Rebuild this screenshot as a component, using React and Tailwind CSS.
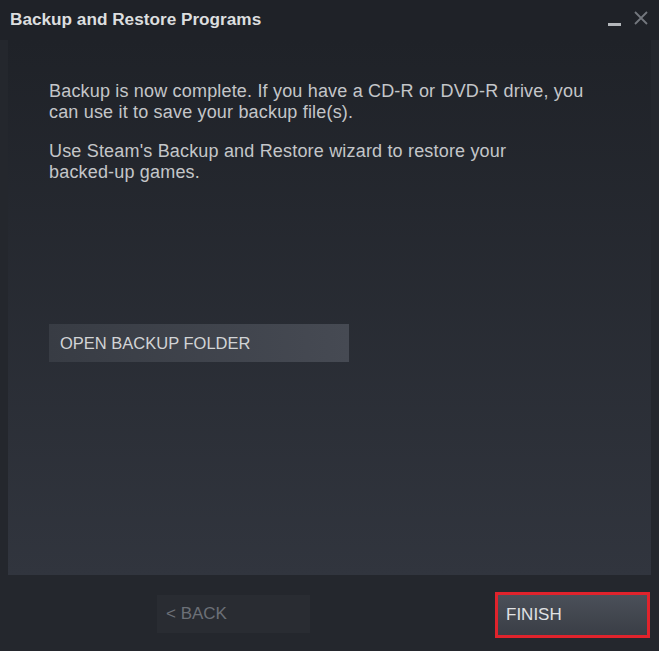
export default function App() {
  return (
    <div
      className="w-[659px] h-[651px] bg-[#24272d] flex flex-col text-[#c9cbcd] overflow-hidden"
      style={{ fontFamily: '"Liberation Sans", Arial, sans-serif' }}
    >
      {/* title bar */}
      <div className="h-[40px] flex items-start justify-between pl-[10px] pr-[10px] pt-[7px] bg-[#1f2228]">
        <div className="text-[17.2px] font-bold text-[#dcdedf]">Backup and Restore Programs</div>
        <div className="flex items-start gap-[12px] pt-[2px]">
          <div className="w-[13px] h-[3px] bg-[#b4b7bb] mt-[14px]" />
          <svg width="16" height="16" viewBox="0 0 16 16" className="mt-[1px]">
            <path d="M2 2 L14 14 M14 2 L2 14" stroke="#73777e" strokeWidth="1.8" />
          </svg>
        </div>
      </div>

      {/* content panel */}
      <div className="mx-[8px] h-[535px] bg-gradient-to-b from-[#1f2228] to-[#31353e] flex flex-col pl-[41px] pr-[20px] pt-[41px]">
        <p className="text-[18px] leading-[21px] tracking-[0.18px] text-[#c4c6c9]">
          Backup is now complete. If you have a CD-R or DVD-R drive, you
          <br />
          can use it to save your backup file(s).
        </p>
        <p className="text-[18px] leading-[21px] tracking-[0.18px] text-[#c4c6c9] mt-[18px]">
          Use Steam's Backup and Restore wizard to restore your
          <br />
          backed-up games.
        </p>
        <button className="mt-[141px] w-[300px] h-[38px] bg-gradient-to-r from-[#383c44] to-[#464a53] text-left pl-[11px] text-[16.5px] text-[#d2d4d6]">
          OPEN BACKUP FOLDER
        </button>
      </div>

      {/* footer */}
      <div className="flex items-start pt-[17px]">
        <button className="ml-[157px] w-[153px] h-[38px] mt-[3px] bg-[#292c32] text-left pl-[9px] text-[17px] text-[#6c7077]">
          &lt; BACK
        </button>
        <div className="ml-[185px] w-[155px] h-[46px] border-[3px] border-[#e0232c] bg-gradient-to-b from-[#4b5059] to-[#3a3e46] flex items-center pl-[8px] text-[17px] text-[#e0e2e4]">
          FINISH
        </div>
      </div>
    </div>
  );
}
